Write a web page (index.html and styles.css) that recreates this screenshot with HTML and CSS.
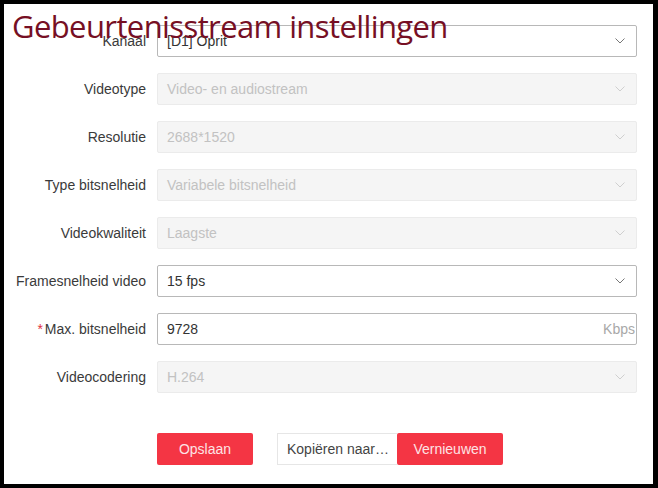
FILE: index.html
```html
<!DOCTYPE html>
<html>
<head>
<meta charset="utf-8">
<link rel="stylesheet" href="styles.css">
</head>
<body>
<div class="frame">
  <h1 class="title">Gebeurtenisstream instellingen</h1>
  <form class="form">
    <div class="row">
      <label class="label">Kanaal</label>
      <div class="field">
        <span class="value">[D1] Oprit</span>
        <svg class="chev" width="10" height="6" viewBox="0 0 10 6"><path d="M0.5 0.5 L5 5 L9.5 0.5" fill="none" stroke="#777" stroke-width="1"/></svg>
      </div>
    </div>
    <div class="row">
      <label class="label">Videotype</label>
      <div class="field disabled">
        <span class="value">Video- en audiostream</span>
        <svg class="chev" width="10" height="6" viewBox="0 0 10 6"><path d="M0.5 0.5 L5 5 L9.5 0.5" fill="none" stroke="#cfcfcf" stroke-width="1"/></svg>
      </div>
    </div>
    <div class="row">
      <label class="label">Resolutie</label>
      <div class="field disabled">
        <span class="value">2688*1520</span>
        <svg class="chev" width="10" height="6" viewBox="0 0 10 6"><path d="M0.5 0.5 L5 5 L9.5 0.5" fill="none" stroke="#cfcfcf" stroke-width="1"/></svg>
      </div>
    </div>
    <div class="row">
      <label class="label">Type bitsnelheid</label>
      <div class="field disabled">
        <span class="value">Variabele bitsnelheid</span>
        <svg class="chev" width="10" height="6" viewBox="0 0 10 6"><path d="M0.5 0.5 L5 5 L9.5 0.5" fill="none" stroke="#cfcfcf" stroke-width="1"/></svg>
      </div>
    </div>
    <div class="row">
      <label class="label">Videokwaliteit</label>
      <div class="field disabled">
        <span class="value">Laagste</span>
        <svg class="chev" width="10" height="6" viewBox="0 0 10 6"><path d="M0.5 0.5 L5 5 L9.5 0.5" fill="none" stroke="#cfcfcf" stroke-width="1"/></svg>
      </div>
    </div>
    <div class="row">
      <label class="label">Framesnelheid video</label>
      <div class="field">
        <span class="value">15 fps</span>
        <svg class="chev" width="10" height="6" viewBox="0 0 10 6"><path d="M0.5 0.5 L5 5 L9.5 0.5" fill="none" stroke="#777" stroke-width="1"/></svg>
      </div>
    </div>
    <div class="row">
      <label class="label"><span class="req">*</span>Max. bitsnelheid</label>
      <div class="field">
        <span class="value">9728</span>
        <span class="suffix">Kbps</span>
      </div>
    </div>
    <div class="row">
      <label class="label">Videocodering</label>
      <div class="field disabled">
        <span class="value">H.264</span>
        <svg class="chev" width="10" height="6" viewBox="0 0 10 6"><path d="M0.5 0.5 L5 5 L9.5 0.5" fill="none" stroke="#cfcfcf" stroke-width="1"/></svg>
      </div>
    </div>
    <div class="actions">
      <button type="button" class="btn save">Opslaan</button>
      <div class="copy">
        <span class="copy-text">Kopiëren naar…</span>
        <button type="button" class="btn refresh">Vernieuwen</button>
      </div>
    </div>
  </form>
</div>
</body>
</html>
```

FILE: styles.css
```css
html, body {
  margin: 0;
  padding: 0;
  background: #000;
}
body {
  width: 658px;
  height: 488px;
  overflow: hidden;
  font-family: "Liberation Sans", Arial, sans-serif;
}
.frame {
  position: relative;
  margin: 4px 5px 0 4px;
  height: 480px;
  background: #fff;
  box-sizing: border-box;
}
.title {
  position: absolute;
  left: 8px;
  top: 2px;
  margin: 0;
  font-family: "Open Sans", sans-serif;
  font-weight: 400;
  font-size: 31px;
  letter-spacing: -0.6px;
  line-height: 40px;
  color: #760f24;
  z-index: 2;
}
.form {
  margin: 0;
  padding: 21px 0 0 0;
  display: flex;
  flex-direction: column;
  gap: 16px;
}
.row {
  display: flex;
  align-items: center;
  height: 32px;
}
.label {
  width: 142px;
  margin-right: 11px;
  text-align: right;
  font-size: 14px;
  color: #3a3a3a;
  white-space: nowrap;
}
.req {
  color: #e0323f;
  margin-right: 2px;
}
.field {
  width: 480px;
  height: 32px;
  box-sizing: border-box;
  border: 1px solid #b8b8b8;
  border-radius: 2px;
  display: flex;
  align-items: center;
  justify-content: space-between;
  padding: 0 11px 0 9px;
  font-size: 14px;
  color: #333;
  background: #fff;
}
.field.disabled {
  background: #f5f5f5;
  border-color: #ebebeb;
  color: #c2c2c2;
}
.suffix {
  color: #a8a8a8;
  font-size: 14px;
  margin-right: -10px;
}
.chev {
  display: block;
}
.actions {
  display: flex;
  align-items: center;
  margin: 24px 0 0 153px;
  gap: 24px;
}
.btn {
  height: 32px;
  border: none;
  border-radius: 2px;
  background: #f43544;
  color: #fde3e5;
  font-family: "Liberation Sans", Arial, sans-serif;
  font-size: 14px;
  padding: 0;
  cursor: pointer;
}
.save {
  width: 96px;
}
.copy {
  display: flex;
  align-items: center;
}
.copy-text {
  width: 120px;
  height: 32px;
  box-sizing: border-box;
  border: 1px solid #e6e6e6;
  border-right: none;
  display: flex;
  align-items: center;
  padding-left: 9px;
  font-size: 14px;
  color: #444;
  white-space: nowrap;
}
.refresh {
  width: 106px;
}
```
